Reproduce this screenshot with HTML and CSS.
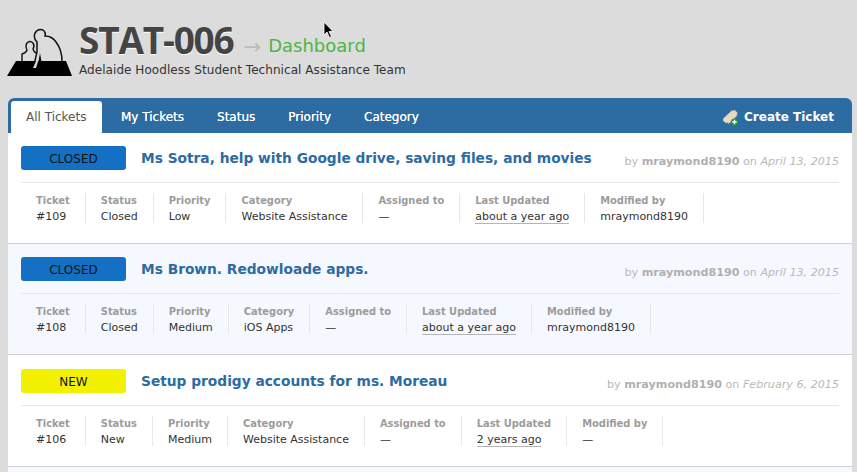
FILE: index.html
```html
<!DOCTYPE html>
<html lang="en">
<head>
<meta charset="utf-8">
<title>STAT-006 Dashboard</title>
<link rel="stylesheet" href="styles.css">
</head>
<body>
<header class="site-header">
  <svg class="logo" width="66" height="50" viewBox="7 28 66 50" aria-hidden="true">
    <path d="M34 65L37 52V42Q33 38 35 33Q38 28 43 30Q46 32 45 36Q52 36 56 42Q62 50 62 61" fill="none" stroke="#111" stroke-width="1.500"/>
    <path d="M22 61V54Q26 53 27 50Q25 46 27 43Q30 40 33 43Q35 46 33 49Q34 52 36 53" fill="none" stroke="#111" stroke-width="1.400"/>
    <path d="M16 61H66L72 76H7Z" fill="#000"/>
    <path d="M38.500 62L40 53L41.500 62Z" fill="#000"/>
    <path d="M33 68L36.500 60H38.500L36 68Z" fill="#dcdcdc"/>
  </svg>
  <div class="brand">
    <div class="brand-line">
      <h1 class="brand-name">STAT-006</h1>
      <span class="brand-arrow">→</span>
      <span class="brand-page">Dashboard</span>
    </div>
    <p class="brand-sub">Adelaide Hoodless Student Technical Assistance Team</p>
  </div>
</header>

<main class="panel">
  <nav class="tabs">
    <a class="tab tab-active">All Tickets</a>
    <a class="tab">My Tickets</a>
    <a class="tab">Status</a>
    <a class="tab">Priority</a>
    <a class="tab">Category</a>
    <a class="create">
      <svg class="create-icon" width="18" height="18" viewBox="0 0 18 18" aria-hidden="true">
        <path d="M1 11L10 2.500Q11.500 3.500 12.500 2L15.500 5Q14 6.500 15 7.500L7 15.500Q5.500 14 4 15L1 12.500Q2 11.500 1 11Z" fill="#e8d9c2" stroke="#d3c2a8" stroke-width=".5"/>
        <circle cx="12.500" cy="14" r="3.600" fill="#1f9a38"/>
        <path d="M12.500 11.800V16.200M10.300 14H14.700" stroke="#fff" stroke-width="1.300"/>
      </svg>
      Create Ticket
    </a>
  </nav>

  <article class="ticket">
    <div class="ticket-head">
      <span class="badge badge-closed">CLOSED</span>
      <a class="ticket-title">Ms Sotra, help with Google drive, saving files, and movies</a>
      <span class="byline">by <b>mraymond8190</b> on <i>April 13, 2015</i></span>
    </div>
    <dl class="meta">
      <div class="cell"><dt>Ticket</dt><dd>#109</dd></div>
      <div class="cell"><dt>Status</dt><dd>Closed</dd></div>
      <div class="cell"><dt>Priority</dt><dd>Low</dd></div>
      <div class="cell"><dt>Category</dt><dd>Website Assistance</dd></div>
      <div class="cell"><dt>Assigned to</dt><dd>—</dd></div>
      <div class="cell"><dt>Last Updated</dt><dd><span class="time">about a year ago</span></dd></div>
      <div class="cell"><dt>Modified by</dt><dd>mraymond8190</dd></div>
    </dl>
  </article>

  <article class="ticket ticket-alt">
    <div class="ticket-head">
      <span class="badge badge-closed">CLOSED</span>
      <a class="ticket-title">Ms Brown. Redowloade apps.</a>
      <span class="byline">by <b>mraymond8190</b> on <i>April 13, 2015</i></span>
    </div>
    <dl class="meta">
      <div class="cell"><dt>Ticket</dt><dd>#108</dd></div>
      <div class="cell"><dt>Status</dt><dd>Closed</dd></div>
      <div class="cell"><dt>Priority</dt><dd>Medium</dd></div>
      <div class="cell"><dt>Category</dt><dd>iOS Apps</dd></div>
      <div class="cell"><dt>Assigned to</dt><dd>—</dd></div>
      <div class="cell"><dt>Last Updated</dt><dd><span class="time">about a year ago</span></dd></div>
      <div class="cell"><dt>Modified by</dt><dd>mraymond8190</dd></div>
    </dl>
  </article>

  <article class="ticket ticket-tall">
    <div class="ticket-head">
      <span class="badge badge-new">NEW</span>
      <a class="ticket-title">Setup prodigy accounts for ms. Moreau</a>
      <span class="byline">by <b>mraymond8190</b> on <i>February 6, 2015</i></span>
    </div>
    <dl class="meta">
      <div class="cell"><dt>Ticket</dt><dd>#106</dd></div>
      <div class="cell"><dt>Status</dt><dd>New</dd></div>
      <div class="cell"><dt>Priority</dt><dd>Medium</dd></div>
      <div class="cell"><dt>Category</dt><dd>Website Assistance</dd></div>
      <div class="cell"><dt>Assigned to</dt><dd>—</dd></div>
      <div class="cell"><dt>Last Updated</dt><dd><span class="time">2 years ago</span></dd></div>
      <div class="cell"><dt>Modified by</dt><dd>—</dd></div>
    </dl>
  </article>

  <div class="ticket-next"></div>
</main>
<svg class="cursor" width="12" height="18" viewBox="0 0 12 18" aria-hidden="true"><path d="M1 1V14L4 11L6.500 16.500L8.500 15.500L6 10.500H10Z" fill="#000" stroke="#fff" stroke-width=".8"/></svg>
</body>
</html>
```
FILE: styles.css
```css
html, body {
  margin: 0;
  height: 472px;
  overflow: hidden;
}
body {
  background: #dcdcdc;
  font-family: "DejaVu Sans", Verdana, sans-serif;
  color: #333;
  position: relative;
}
.site-header {
  display: flex;
  align-items: flex-start;
  height: 98px;
  padding: 0 0 0 7px;
  box-sizing: border-box;
}
.logo {
  margin-top: 28px;
  flex: none;
}
.brand {
  margin-left: 6px;
  margin-top: 19px;
}
.brand-line {
  display: flex;
  align-items: baseline;
  height: 42px;
}
.brand-name {
  margin: 0;
  font: 700 37px/42px "Open Sans", sans-serif;
  color: #444;
  letter-spacing: -1.200px;
  text-shadow: 0 1px 0 #fff;
}
.brand-arrow {
  margin-left: 10px;
  font-size: 21px;
  color: #bbb;
}
.brand-page {
  margin-left: 7px;
  font-size: 18px;
  color: #4cb648;
  transform: translateY(-2px);
}
.brand-sub {
  margin: 1px 0 0;
  font-size: 12px;
  line-height: 16px;
  letter-spacing: .06px;
  color: #333;
}
.panel {
  margin: 0 5px 0 8px;
  background: #fff;
  border-radius: 6px 6px 0 0;
  overflow: hidden;
}
.tabs {
  display: flex;
  align-items: flex-end;
  height: 35px;
  box-sizing: border-box;
  background: #2d6ba3;
  padding: 3px 18px 0 3px;
  font-size: 12px;
}
.tab {
  height: 32px;
  line-height: 33px;
  padding: 0 16px 0 17px;
  color: #fff;
  text-shadow: 0 0 .3px #fff;
}
.tab-active {
  padding: 0 15px 0 15px;
  margin-right: 2px;
  width: 61px;
  background: #fff;
  color: #555;
  border-radius: 3px 3px 0 0;
  text-shadow: none;
}
.create {
  margin-left: auto;
  display: flex;
  align-items: center;
  gap: 4px;
  height: 32px;
  color: #fff;
  font-weight: 700;
  font-size: 12px;
}
.ticket {
  height: 111px;
  box-sizing: border-box;
  padding: 13px 13px 0;
  background: #fff;
  border-bottom: 1px solid #cfd0d3;
}
.ticket-tall {
  height: 112px;
  padding-top: 14px;
}
.ticket-alt {
  background: #f5f8fe;
}
.ticket-next {
  height: 10px;
  background: #f5f8fe;
}
.ticket-head {
  display: flex;
  align-items: center;
  height: 37px;
  padding-bottom: 12px;
  box-sizing: border-box;
  border-bottom: 1px solid #e8e8e8;
}
.badge {
  flex: none;
  width: 105px;
  height: 24px;
  line-height: 26px;
  text-align: center;
  border-radius: 3px;
  font-size: 12px;
  color: #111;
}
.badge-closed {
  background: #1470c2;
}
.badge-new {
  background: #f1f100;
}
.ticket-title {
  margin-left: 15px;
  font-size: 13.750px;
  font-weight: 700;
  color: #2d6ba3;
  white-space: nowrap;
}
.byline {
  margin-left: auto;
  padding-top: 6px;
  font-size: 11.150px;
  color: #b9b9b9;
  white-space: nowrap;
}
.byline b {
  color: #b0b0b0;
}
.meta {
  display: flex;
  margin: 10px 0 0;
}
.cell {
  padding: 0 15px 0 15px;
  border-right: 1px solid #e8e8e8;
  height: 30px;
}
.meta dt {
  font-family: "DejaVu Sans Condensed", "DejaVu Sans", sans-serif;
  font-size: 11px;
  line-height: 15px;
  font-weight: 700;
  color: #9c9c9c;
}
.meta dd {
  margin: 0;
  font-size: 11px;
  line-height: 17px;
  color: #333;
  white-space: nowrap;
}
.time {
  border-bottom: 1px solid #b5b5b5;
}
.cursor {
  position: absolute;
  left: 323px;
  top: 21px;
}
```
